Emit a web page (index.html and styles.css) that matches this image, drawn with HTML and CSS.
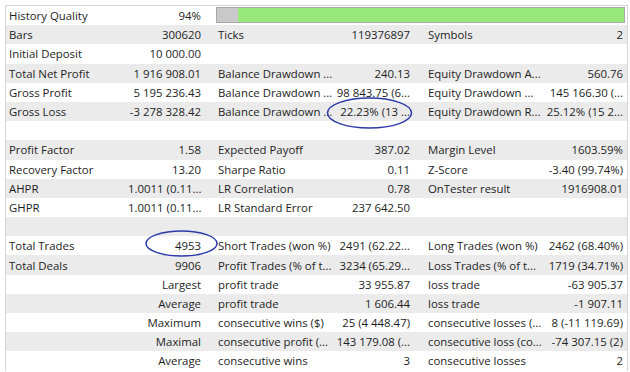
FILE: index.html
```html
<!DOCTYPE html>
<html>
<head>
<meta charset="utf-8">
<link rel="stylesheet" href="styles.css">
</head>
<body>
<div class="report">
  <div class="row">
    <div class="lbl">History Quality</div><div class="val v1">94%</div>
    <div class="barcell"><div class="bar"><div class="bar-gap"></div><div class="bar-fill"></div></div></div>
  </div>
  <div class="row alt">
    <div class="lbl">Bars</div><div class="val v1">300620</div>
    <div class="lbl">Ticks</div><div class="val v2">119376897</div>
    <div class="lbl">Symbols</div><div class="val v3">2</div>
  </div>
  <div class="row">
    <div class="lbl">Initial Deposit</div><div class="val v1">10 000.00</div>
    <div class="lbl"></div><div class="val v2"></div>
    <div class="lbl"></div><div class="val v3"></div>
  </div>
  <div class="row alt">
    <div class="lbl">Total Net Profit</div><div class="val v1">1 916 908.01</div>
    <div class="lbl">Balance Drawdown ...</div><div class="val v2">240.13</div>
    <div class="lbl">Equity Drawdown A...</div><div class="val v3">560.76</div>
  </div>
  <div class="row">
    <div class="lbl">Gross Profit</div><div class="val v1">5 195 236.43</div>
    <div class="lbl">Balance Drawdown ...</div><div class="val v2">98 843.75 (6...</div>
    <div class="lbl">Equity Drawdown ...</div><div class="val v3">145 166.30 (...</div>
  </div>
  <div class="row alt">
    <div class="lbl">Gross Loss</div><div class="val v1">-3 278 328.42</div>
    <div class="lbl">Balance Drawdown ...</div><div class="val v2">22.23% (13 ...</div>
    <div class="lbl">Equity Drawdown R...</div><div class="val v3">25.12% (15 2...</div>
  </div>
  <div class="row"></div>
  <div class="row alt">
    <div class="lbl">Profit Factor</div><div class="val v1">1.58</div>
    <div class="lbl">Expected Payoff</div><div class="val v2">387.02</div>
    <div class="lbl">Margin Level</div><div class="val v3">1603.59%</div>
  </div>
  <div class="row">
    <div class="lbl">Recovery Factor</div><div class="val v1">13.20</div>
    <div class="lbl">Sharpe Ratio</div><div class="val v2">0.11</div>
    <div class="lbl">Z-Score</div><div class="val v3">-3.40 (99.74%)</div>
  </div>
  <div class="row alt">
    <div class="lbl">AHPR</div><div class="val v1">1.0011 (0.11...</div>
    <div class="lbl">LR Correlation</div><div class="val v2">0.78</div>
    <div class="lbl">OnTester result</div><div class="val v3">1916908.01</div>
  </div>
  <div class="row">
    <div class="lbl">GHPR</div><div class="val v1">1.0011 (0.11...</div>
    <div class="lbl">LR Standard Error</div><div class="val v2">237 642.50</div>
    <div class="lbl"></div><div class="val v3"></div>
  </div>
  <div class="row alt"></div>
  <div class="row">
    <div class="lbl">Total Trades</div><div class="val v1">4953</div>
    <div class="lbl">Short Trades (won %)</div><div class="val v2">2491 (62.22...</div>
    <div class="lbl">Long Trades (won %)</div><div class="val v3">2462 (68.40%)</div>
  </div>
  <div class="row alt">
    <div class="lbl">Total Deals</div><div class="val v1">9906</div>
    <div class="lbl">Profit Trades (% of t...</div><div class="val v2">3234 (65.29...</div>
    <div class="lbl">Loss Trades (% of t...</div><div class="val v3">1719 (34.71%)</div>
  </div>
  <div class="row">
    <div class="lbl"></div><div class="val v1">Largest</div>
    <div class="lbl">profit trade</div><div class="val v2">33 955.87</div>
    <div class="lbl">loss trade</div><div class="val v3">-63 905.37</div>
  </div>
  <div class="row alt">
    <div class="lbl"></div><div class="val v1">Average</div>
    <div class="lbl">profit trade</div><div class="val v2">1 606.44</div>
    <div class="lbl">loss trade</div><div class="val v3">-1 907.11</div>
  </div>
  <div class="row">
    <div class="lbl"></div><div class="val v1">Maximum</div>
    <div class="lbl">consecutive wins ($)</div><div class="val v2">25 (4 448.47)</div>
    <div class="lbl">consecutive losses (...</div><div class="val v3">8 (-11 119.69)</div>
  </div>
  <div class="row alt">
    <div class="lbl"></div><div class="val v1">Maximal</div>
    <div class="lbl">consecutive profit (...</div><div class="val v2">143 179.08 (...</div>
    <div class="lbl">consecutive loss (co...</div><div class="val v3">-74 307.15 (2)</div>
  </div>
  <div class="row">
    <div class="lbl"></div><div class="val v1">Average</div>
    <div class="lbl">consecutive wins</div><div class="val v2">3</div>
    <div class="lbl">consecutive losses</div><div class="val v3">2</div>
  </div>
</div>
<svg class="marks" width="630" height="372" viewBox="0 0 630 372">
  <ellipse cx="369.5" cy="113" rx="42" ry="15" />
  <ellipse cx="181.5" cy="243.5" rx="35.5" ry="12.5" />
</svg>
</body>
</html>
```
FILE: styles.css
```css
html, body {
  margin: 0;
  padding: 0;
  background: #ffffff;
}
body {
  position: relative;
  width: 630px;
  height: 372px;
  overflow: hidden;
  font-family: "Open Sans", "Noto Sans", "DejaVu Sans", sans-serif;
  font-size: 11.4px;
  color: #1e1e1e;
}
.report {
  margin: 5px 0 0 5px;
  width: 621px;
  border-top: 1px solid #d6d6d6;
  border-left: 1px solid #d6d6d6;
  border-right: 1px solid #d6d6d6;
}
.row {
  display: grid;
  grid-template-columns: 122px 87px 121px 89px 121px 81px;
  height: 19.2px;
  align-items: center;
  background: #ffffff;
}
.row.alt {
  background: #ebebeb;
}
.lbl, .val {
  white-space: nowrap;
  overflow: hidden;
  line-height: 19px;
}
.lbl {
  padding-left: 3px;
}
.val {
  text-align: right;
}
.v1 { padding-right: 14px; }
.v2 { padding-right: 15px; }
.v3 { padding-right: 4px; }
.barcell {
  grid-column: 3 / 7;
  height: 19.2px;
  display: flex;
  align-items: center;
  padding: 0 2px 0 1px;
}
.bar {
  flex: 1;
  height: 14px;
  border: 1px solid #a9a9a9;
  display: flex;
  margin-top: -2px;
}
.bar-gap {
  width: 21px;
  background: #c9c9c9;
}
.bar-fill {
  flex: 1;
  background: #98e87c;
}
.marks {
  position: absolute;
  left: 0;
  top: 0;
  pointer-events: none;
}
.marks ellipse {
  fill: none;
  stroke: #2b3aa8;
  stroke-width: 1.5;
}
```
